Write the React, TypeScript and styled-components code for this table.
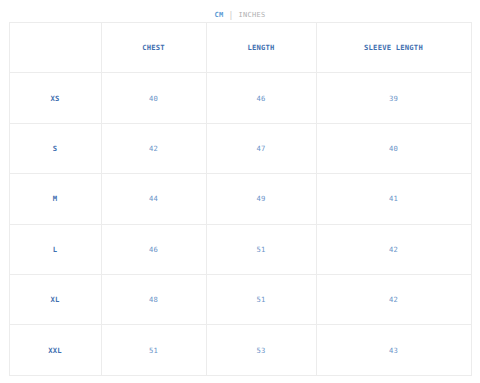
import React from "react";
import styled, { createGlobalStyle } from "styled-components";

const Global = createGlobalStyle`
  body {
    margin: 8px;
    background: #ffffff;
    font-family: "DejaVu Sans Mono", "Liberation Mono", monospace;
  }
`;

const Wrapper = styled.div`
  display: flex;
  flex-direction: column;
  align-items: center;
`;

const UnitToggle = styled.div`
  display: flex;
  align-items: center;
  gap: 5px;
  height: 14px;
  font-size: 7px;
  letter-spacing: 0.3px;
`;

const Unit = styled.span<{ $active?: boolean }>`
  color: ${(p) => (p.$active ? "#5b9bd5" : "#b0b0b0")};
  font-weight: ${(p) => (p.$active ? 700 : 400)};
`;

const Divider = styled.span`
  color: #c8c8c8;
  font-size: 8px;
`;

const Table = styled.table`
  width: 462px;
  border-collapse: collapse;
  table-layout: fixed;
  border: 1px solid #ececec;
`;

const Cell = styled.td<{ $head?: boolean }>`
  border: 1px solid #ececec;
  height: 49.4px;
  padding: 0;
  text-align: center;
  vertical-align: middle;
  font-size: 7.2px;
  letter-spacing: 0.2px;
  color: ${(p) => (p.$head ? "#3f6fb0" : "#6a93c8")};
  font-weight: ${(p) => (p.$head ? 700 : 400)};
`;

const cols = [92, 105, 110, 155];
const headers = ["", "CHEST", "LENGTH", "SLEEVE LENGTH"];
const rows: [string, number, number, number][] = [
  ["XS", 40, 46, 39],
  ["S", 42, 47, 40],
  ["M", 44, 49, 41],
  ["L", 46, 51, 42],
  ["XL", 48, 51, 42],
  ["XXL", 51, 53, 43],
];

export default function App() {
  return (
    <>
      <Global />
      <Wrapper>
        <UnitToggle>
          <Unit $active>CM</Unit>
          <Divider>|</Divider>
          <Unit>INCHES</Unit>
        </UnitToggle>
        <Table>
          <colgroup>
            {cols.map((w, i) => (
              <col key={i} style={{ width: w }} />
            ))}
          </colgroup>
          <thead>
            <tr>
              {headers.map((h, i) => (
                <Cell as="th" key={i} $head>
                  {h}
                </Cell>
              ))}
            </tr>
          </thead>
          <tbody>
            {rows.map((r) => (
              <tr key={r[0]}>
                <Cell $head>{r[0]}</Cell>
                <Cell>{r[1]}</Cell>
                <Cell>{r[2]}</Cell>
                <Cell>{r[3]}</Cell>
              </tr>
            ))}
          </tbody>
        </Table>
      </Wrapper>
    </>
  );
}
